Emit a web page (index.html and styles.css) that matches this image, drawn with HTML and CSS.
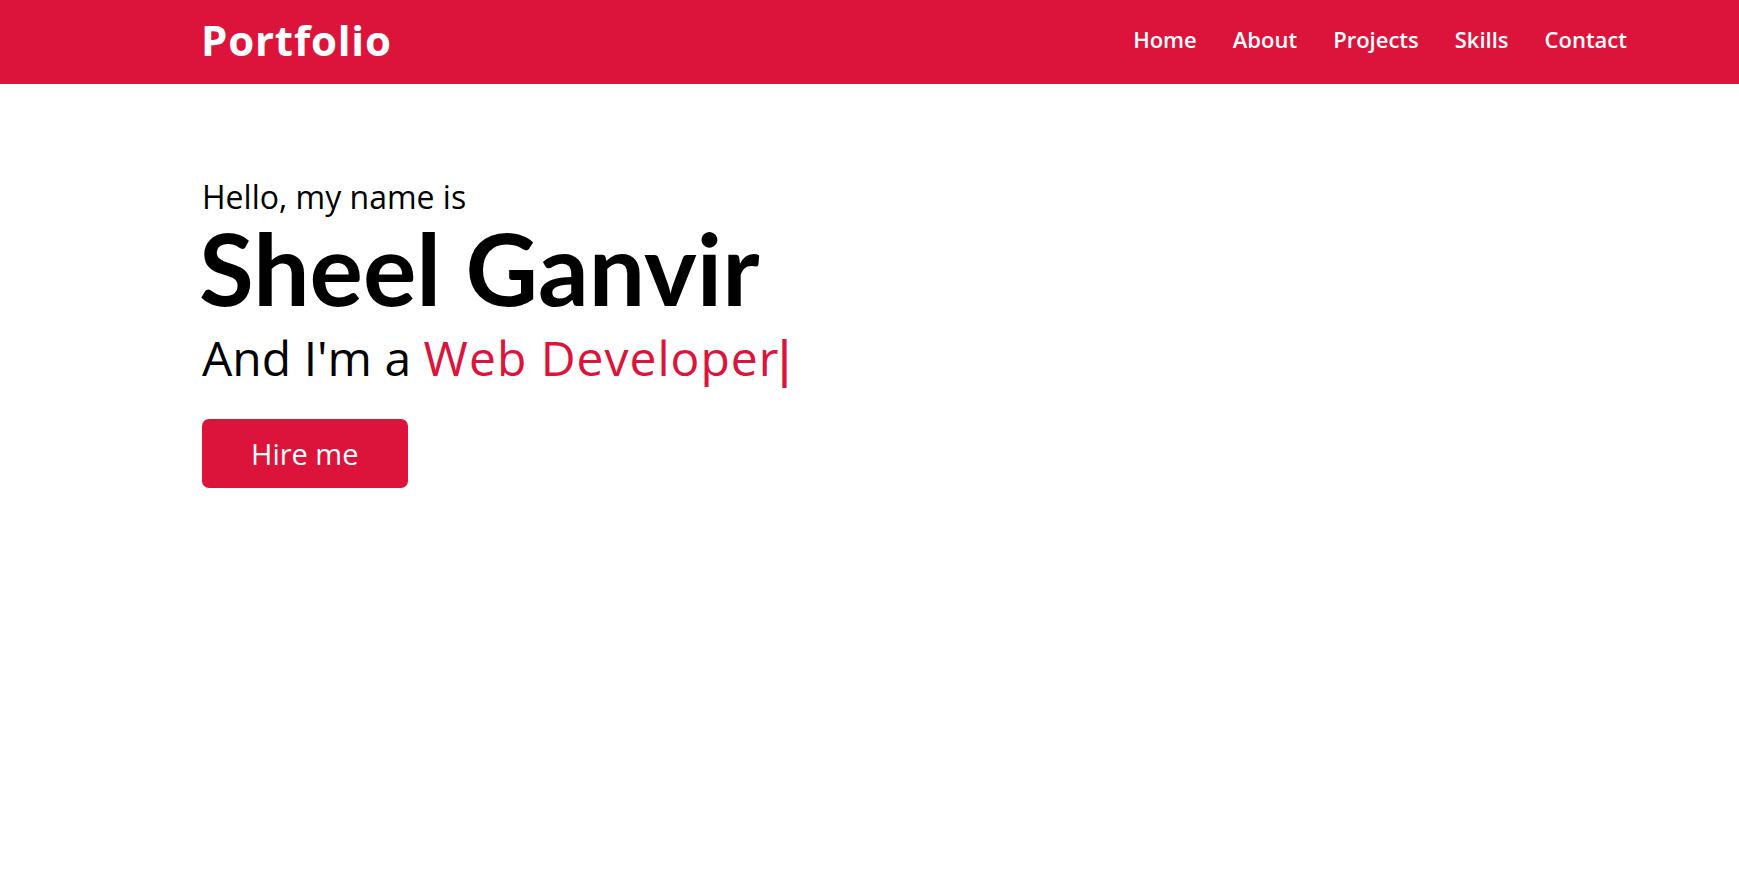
FILE: index.html
```html
<!DOCTYPE html>
<html lang="en">
<head>
<meta charset="utf-8">
<title>Portfolio</title>
<link rel="stylesheet" href="styles.css">
</head>
<body>
<nav class="navbar">
  <div class="max-width nav-inner">
    <div class="logo"><a href="#">Portfolio</a></div>
    <ul class="menu">
      <li><a href="#">Home</a></li>
      <li><a href="#">About</a></li>
      <li><a href="#">Projects</a></li>
      <li><a href="#">Skills</a></li>
      <li><a href="#">Contact</a></li>
    </ul>
  </div>
</nav>
<section class="home">
  <div class="max-width">
    <div class="home-content">
      <div class="text-1">Hello, my name is</div>
      <div class="text-2">Sheel Ganvir</div>
      <div class="text-3">And I'm a <span class="typing">Web Developer</span><span class="cursor">|</span></div>
      <a class="hire" href="#">Hire me</a>
    </div>
  </div>
</section>
</body>
</html>
```
FILE: styles.css
```css
* { box-sizing: border-box; }
html, body { margin: 0; padding: 0; background: #fff; }
body { font-family: "Open Sans", "Noto Sans", sans-serif; color: #000; }
a { text-decoration: none; }
ul { list-style: none; margin: 0; padding: 0; }

.max-width {
  margin-left: 202px;
  margin-right: 112px;
}

.navbar {
  background: #dc143c;
  height: 84px;
  padding-bottom: 5px;
  display: flex;
  align-items: center;
}
.nav-inner {
  flex: 1;
  display: flex;
  align-items: center;
  justify-content: space-between;
}
.logo a {
  color: #fff;
  font-size: 42px;
  font-weight: 700;
  letter-spacing: 0.8px;
  margin-left: -1px;
  display: block;
}
.menu {
  display: flex;
  gap: 36px;
  margin-top: -1px;
}
.menu a {
  display: block;
  color: #fff;
  font-size: 22px;
  font-weight: 600;
}

.home-content {
  padding-top: 93px;
}
.text-1 {
  font-size: 32px;
  line-height: 40px;
}
.text-2 {
  font-family: "Lato", "Open Sans", sans-serif;
  font-size: 100px;
  line-height: 100px;
  font-weight: 700;
  letter-spacing: 0;
  margin-left: -3px;
}
.text-3 {
  font-size: 48px;
  line-height: 60px;
  margin-top: 11px;
}
.typing {
  color: #dc143c;
  letter-spacing: 1px;
}
.cursor {
  color: #dc143c;
  margin-left: -8px;
  font-weight: 600;
}
.hire {
  display: inline-block;
  margin-top: 31px;
  background: #dc143c;
  color: #fff;
  border: 2px solid #dc143c;
  border-radius: 7px;
  font-size: 29px;
  line-height: 37.4px;
  padding: 14px 47px;
}
```
